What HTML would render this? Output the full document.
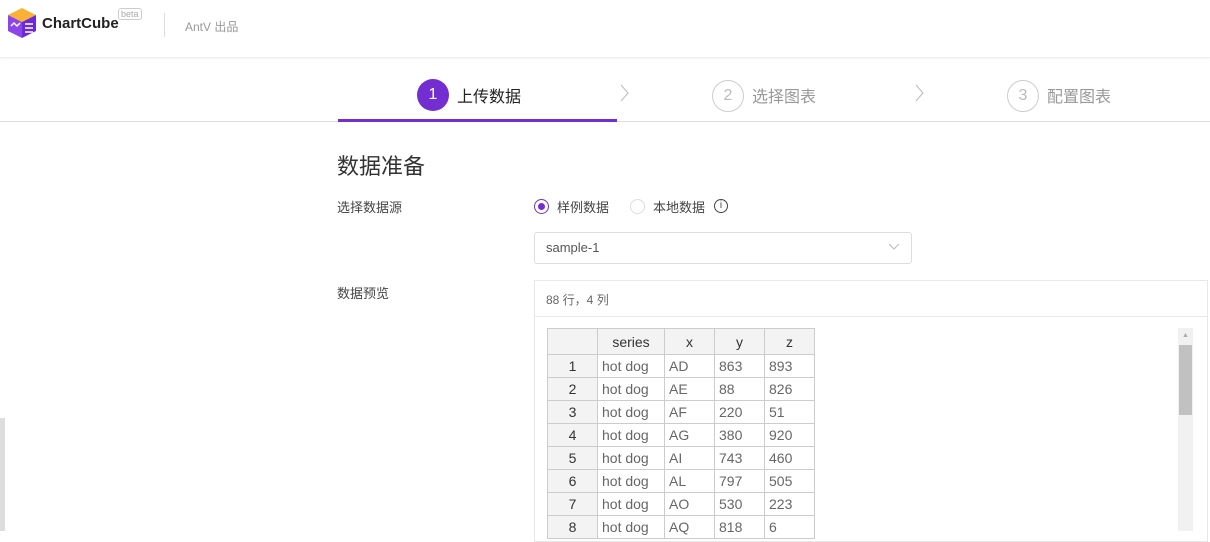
<!DOCTYPE html><html><head><meta charset="utf-8"><style>
body{margin:0;width:1210px;height:531px;overflow:hidden;background:#fff;font-family:"Liberation Sans","Noto Sans CJK SC",sans-serif;position:relative}
.a{position:absolute}
td{border:1px solid #ccc;height:22px;padding:0 4px;font-size:14px;color:#666;line-height:22px}
table{border-collapse:collapse;position:absolute;left:547px;top:328px}
.h td{background:#f3f3f3;text-align:center;color:#333;height:25px}
td.i{background:#f3f3f3;text-align:center;color:#333}
</style></head><body>
<div class="a" style="left:0;top:0;width:1210px;height:57px;border-bottom:1px solid #eee;box-shadow:0 1px 3px rgba(0,0,0,.05)"></div>
<svg class="a" style="left:7px;top:7px" width="30" height="32" viewBox="0 0 30 32"><polygon points="15,1 29,8 15,15 1,8" fill="#f9b233"/><polygon points="1,8 15,15 15,31 1,24" fill="#8e44e8"/><polygon points="29,8 15,15 15,31 29,24" fill="#6a2bd6"/><path d="M4 19l3-3 3 3 3-3" stroke="#fff" fill="none" stroke-width="1.5"/><path d="M18 17h8M18 21h8M18 25h8" stroke="#fff" stroke-width="1.5"/></svg>
<div class="a" style="left:42px;top:15px;font-size:15px;font-weight:bold;color:#222">ChartCube</div>
<div class="a" style="left:118px;top:8px;font-size:9px;color:#aaa;border:1px solid #ccc;border-radius:3px;padding:0 2px;line-height:10px">beta</div>
<div class="a" style="left:164px;top:13px;width:1px;height:24px;background:#ddd"></div>
<div class="a" style="left:185px;top:18px;font-size:12px;color:#999">AntV 出品</div>
<div class="a" style="left:0;top:121px;width:1210px;height:1px;background:#ddd"></div>
<div class="a" style="left:338px;top:119px;width:279px;height:3px;background:#722ed1"></div>
<div class="a" style="left:417px;top:79px;width:32px;height:32px;border-radius:50%;background:#722ed1;color:#fff;text-align:center;line-height:32px;font-size:16px">1</div>
<div class="a" style="left:457px;top:83px;font-size:16px;color:#222">上传数据</div>
<svg class="a" style="left:620px;top:84px" width="10" height="18"><path d="M1 1l7 8-7 8" stroke="#bbb" fill="none"/></svg>
<div class="a" style="left:712px;top:80px;width:30px;height:30px;border-radius:50%;border:1px solid #ccc;color:#bbb;text-align:center;line-height:30px;font-size:16px">2</div>
<div class="a" style="left:752px;top:83px;font-size:16px;color:#999">选择图表</div>
<svg class="a" style="left:915px;top:84px" width="10" height="18"><path d="M1 1l7 8-7 8" stroke="#bbb" fill="none"/></svg>
<div class="a" style="left:1007px;top:80px;width:30px;height:30px;border-radius:50%;border:1px solid #ccc;color:#bbb;text-align:center;line-height:30px;font-size:16px">3</div>
<div class="a" style="left:1047px;top:83px;font-size:16px;color:#999">配置图表</div>
<div class="a" style="left:337px;top:149px;font-size:22px;color:#333">数据准备</div>
<div class="a" style="left:337px;top:197px;font-size:13px;color:#444">选择数据源</div>
<div class="a" style="left:534px;top:199px;width:15px;height:15px;border-radius:50%;border:1px solid #722ed1;box-sizing:border-box"><div style="margin:3px;width:7px;height:7px;border-radius:50%;background:#722ed1"></div></div>
<div class="a" style="left:557px;top:197px;font-size:13px;color:#444">样例数据</div>
<div class="a" style="left:630px;top:199px;width:15px;height:15px;border-radius:50%;border:1px solid #ddd;box-sizing:border-box"></div>
<div class="a" style="left:653px;top:197px;font-size:13px;color:#444">本地数据</div>
<div class="a" style="left:714px;top:199px;width:14px;height:14px;border-radius:50%;border:1px solid #444;box-sizing:border-box;font-size:10px;text-align:center;line-height:12px;color:#444">i</div>
<div class="a" style="left:534px;top:232px;width:376px;height:30px;border:1px solid #ddd;border-radius:3px"></div>
<div class="a" style="left:546px;top:240px;font-size:13px;color:#555">sample-1</div>
<svg class="a" style="left:888px;top:243px" width="12" height="8"><path d="M1 1l5 5 5-5" stroke="#bbb" fill="none"/></svg>
<div class="a" style="left:337px;top:283px;font-size:13px;color:#444">数据预览</div>
<div class="a" style="left:534px;top:280px;width:672px;height:260px;border:1px solid #e8e8e8"></div>
<div class="a" style="left:534px;top:316px;width:673px;height:1px;background:#e8e8e8"></div>
<div class="a" style="left:546px;top:291px;font-size:12px;color:#666">88 行，4 列</div>
<table>
<tr class="h"><td style="width:41px"></td><td style="width:58px">series</td><td style="width:41px">x</td><td style="width:41px">y</td><td style="width:41px">z</td></tr>
<tr><td class="i">1</td><td>hot dog</td><td>AD</td><td>863</td><td>893</td></tr>
<tr><td class="i">2</td><td>hot dog</td><td>AE</td><td>88</td><td>826</td></tr>
<tr><td class="i">3</td><td>hot dog</td><td>AF</td><td>220</td><td>51</td></tr>
<tr><td class="i">4</td><td>hot dog</td><td>AG</td><td>380</td><td>920</td></tr>
<tr><td class="i">5</td><td>hot dog</td><td>AI</td><td>743</td><td>460</td></tr>
<tr><td class="i">6</td><td>hot dog</td><td>AL</td><td>797</td><td>505</td></tr>
<tr><td class="i">7</td><td>hot dog</td><td>AO</td><td>530</td><td>223</td></tr>
<tr><td class="i">8</td><td>hot dog</td><td>AQ</td><td>818</td><td>6</td></tr>
</table>
<div class="a" style="left:1178px;top:328px;width:15px;height:203px;background:#f1f1f1"></div>
<div class="a" style="left:1182px;top:332px;font-size:7px;color:#aaa">▲</div>
<div class="a" style="left:1179px;top:345px;width:13px;height:70px;background:#c1c1c1"></div>
<div class="a" style="left:0;top:418px;width:5px;height:113px;background:#ddd"></div>
</body></html>
